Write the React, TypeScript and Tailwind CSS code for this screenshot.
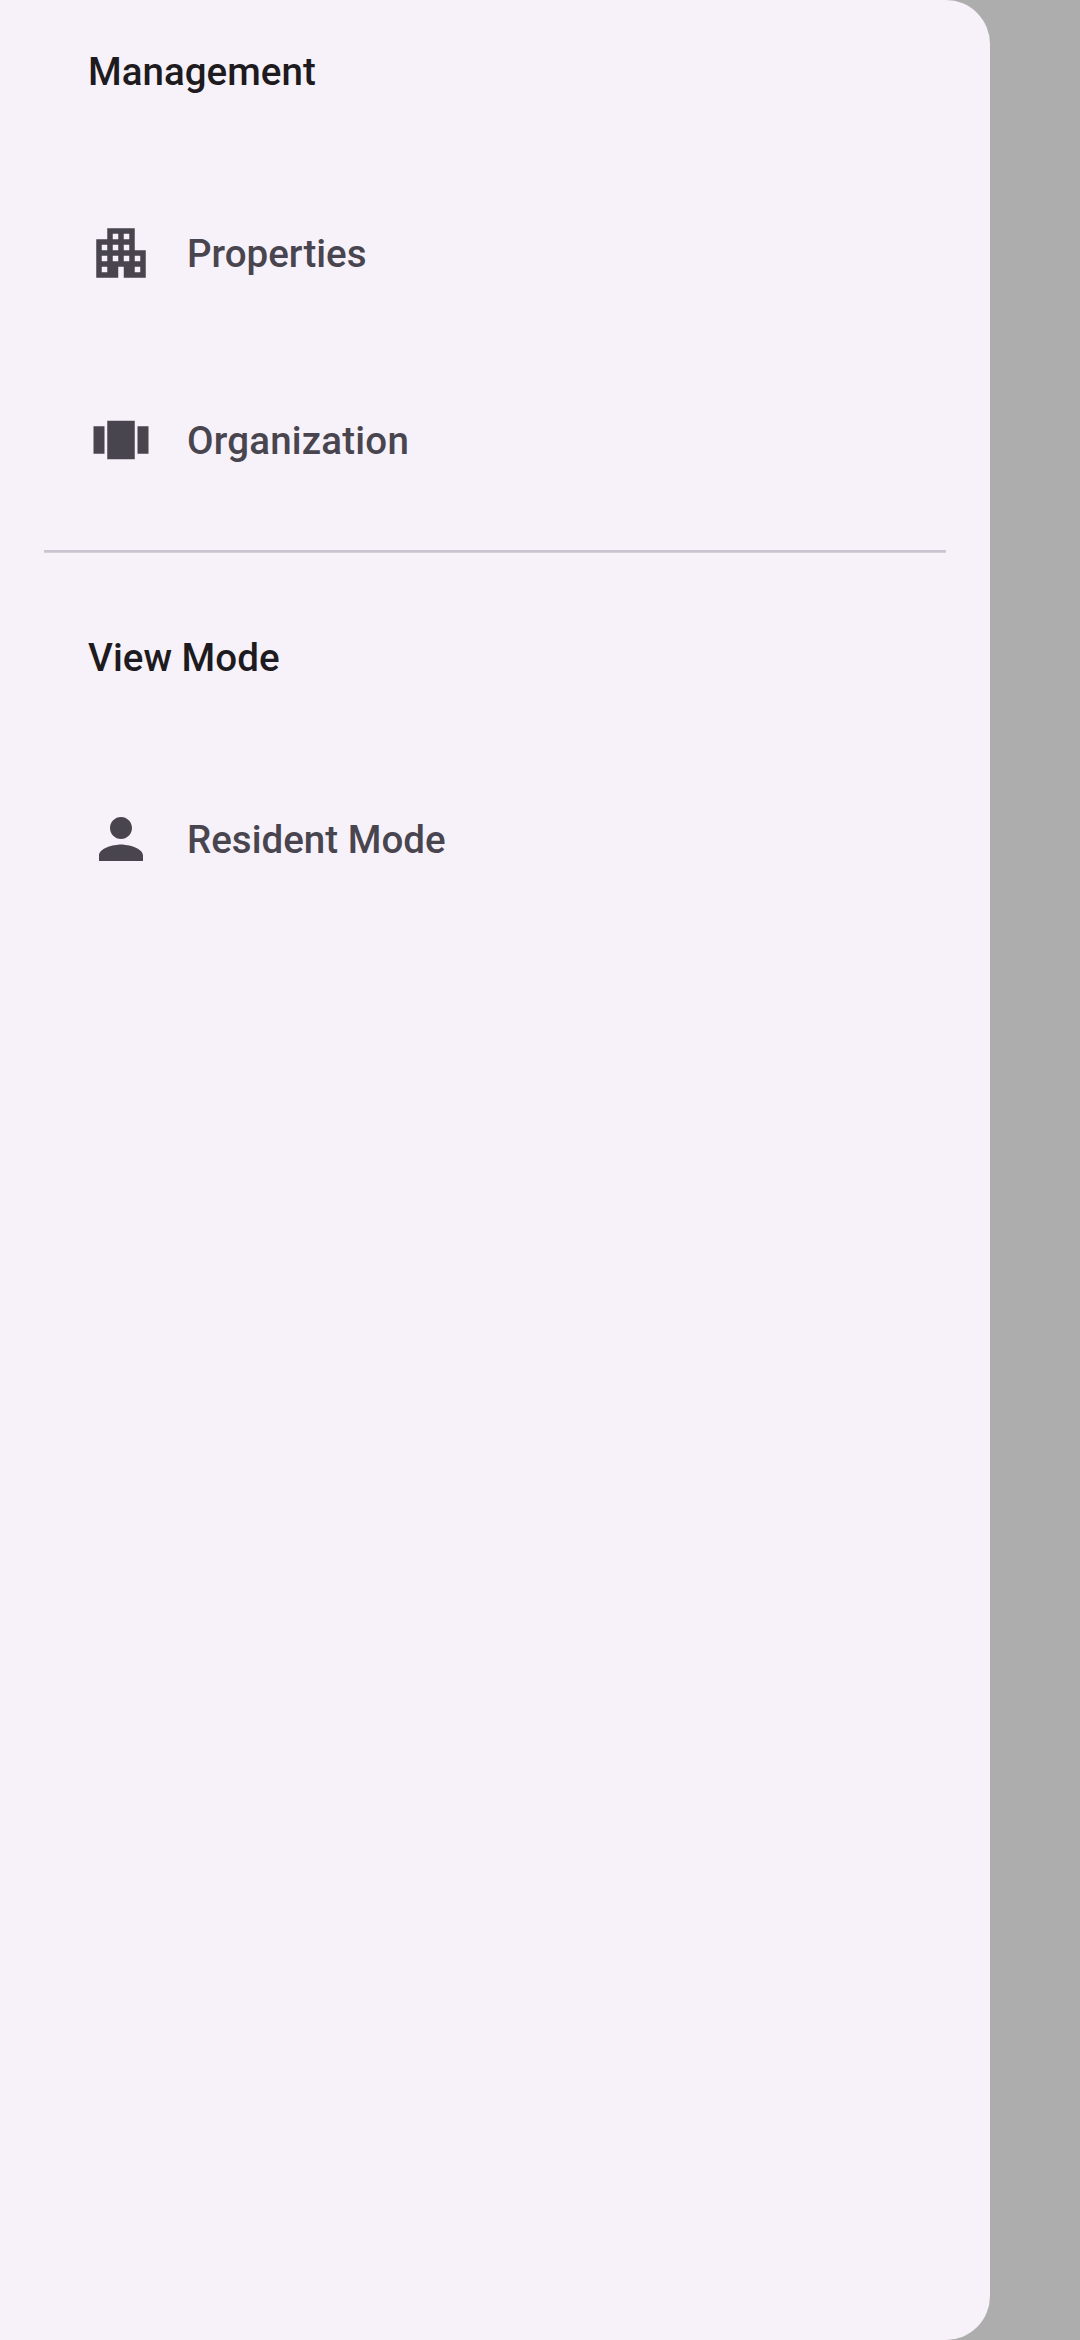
import React from "react";

const APARTMENT =
  "M17 11V3H7v4H3v14h8v-4h2v4h8V11h-4zM7 19H5v-2h2v2zm0-4H5v-2h2v2zm0-4H5V9h2v2zm4 4H9v-2h2v2zm0-4H9V9h2v2zm0-4H9V5h2v2zm4 8h-2v-2h2v2zm0-4h-2V9h2v2zm0-4h-2V5h2v2zm4 12h-2v-2h2v2zm0-4h-2v-2h2v2z";
const CAROUSEL = "M2 7h4v10H2V7zm5 12h10V5H7v14zM18 7h4v10h-4V7z";
const PERSON =
  "M12 12c2.21 0 4-1.79 4-4s-1.79-4-4-4-4 1.79-4 4 1.79 4 4 4zm0 2c-2.67 0-8 1.34-8 4v2h16v-2c0-2.66-5.33-4-8-4z";

function SectionTitle({ children }: { children: React.ReactNode }) {
  return (
    <h2 className="flex h-[144px] items-center pl-[88px] text-[38.5px] font-medium tracking-[0.03px] text-[#1d1b20]">
      {children}
    </h2>
  );
}

function Item({ path, label, tracking = "tracking-[0.01px]" }: { path: string; label: string; tracking?: string }) {
  return (
    <a className="flex h-[154px] items-center pl-[88px] text-[#49454f]">
      <svg viewBox="0 0 24 24" className="mb-[2px] size-[66px] shrink-0" fill="currentColor">
        <path d={path} />
      </svg>
      <span className={`ml-[33px] text-[38.5px] font-medium ${tracking}`}>{label}</span>
    </a>
  );
}

export default function App() {
  return (
    <div className="h-[2340px] w-[1080px] overflow-hidden bg-[#adadad] font-['Roboto',sans-serif]">
      <nav className="flex h-full w-[990px] flex-col rounded-r-[44px] bg-[#f7f2fa]">
        <SectionTitle>Management</SectionTitle>
        <div className="mt-[33px] flex flex-col gap-[33px]">
          <Item path={APARTMENT} label="Properties" />
          <Item path={CAROUSEL} label="Organization" tracking="tracking-[0.2px]" />
        </div>
        <hr className="mx-[44px] mt-[32px] h-[3px] border-0 border-b border-[#d5d0da] bg-[#cac4d0]" />
        <div className="mt-[33px]">
          <SectionTitle>View Mode</SectionTitle>
        </div>
        <div className="mt-[33px]">
          <Item path={PERSON} label="Resident Mode" />
        </div>
      </nav>
    </div>
  );
}
